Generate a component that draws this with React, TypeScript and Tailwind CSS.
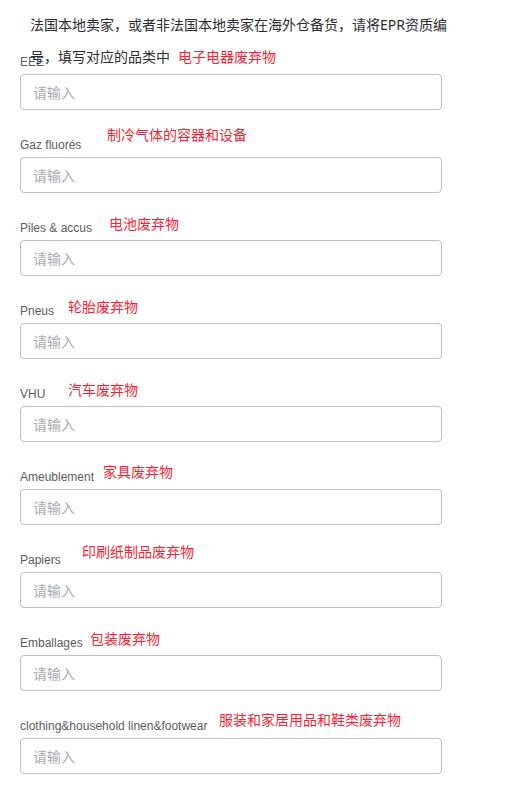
import React from "react";

interface Field {
  label: string;
  note: string;
  noteLeft: number;
  noteShift: number;
}

const fields: Field[] = [
  { label: "EEE", note: "", noteLeft: 0, noteShift: 0 },
  { label: "Gaz fluorés", note: "制冷气体的容器和设备", noteLeft: 107, noteShift: -8 },
  { label: "Piles & accus", note: "电池废弃物", noteLeft: 109, noteShift: -2 },
  { label: "Pneus", note: "轮胎废弃物", noteLeft: 68, noteShift: -2 },
  { label: "VHU", note: "汽车废弃物", noteLeft: 68, noteShift: -2 },
  { label: "Ameublement", note: "家具废弃物", noteLeft: 103, noteShift: -3 },
  { label: "Papiers", note: "印刷纸制品废弃物", noteLeft: 82, noteShift: -6 },
  { label: "Emballages", note: "包装废弃物", noteLeft: 90, noteShift: -2 },
  { label: "clothing&household linen&footwear", note: "服装和家居用品和鞋类废弃物", noteLeft: 219, noteShift: -4 },
];

const font = { fontFamily: '"Noto Sans", "Noto Sans CJK SC", sans-serif' };
const labelFont = { fontFamily: '"Liberation Sans", "Noto Sans CJK SC", sans-serif' };

export default function App() {
  return (
    <div className="relative w-[512px] min-h-[799px] bg-white" style={font}>
      {/* intro text overlaps the first label, as in the page */}
      <p className="absolute left-[30px] top-[9px] w-[422px] text-[14px] leading-[32px] text-[#2b2d31] z-10">
        法国本地卖家，或者非法国本地卖家在海外仓备货，请将EPR资质编号，填写对应的品类中
        <span className="ml-2 text-[#fb1f35]">电子电器废弃物</span>
      </p>

      <div className="flex flex-col pt-[50px] pl-5 w-[442px]">
        {fields.map((f) => (
          <div key={f.label} className="relative mb-[23px]">
            <div className="h-5 pt-[3px] flex items-center text-[12px] text-[#5a5c61]" style={labelFont}>
              {f.label}
            </div>
            {f.note && (
              <span
                className="absolute text-[14px] leading-5 text-[#fb1f35] whitespace-nowrap"
                style={{ left: f.noteLeft - 20, top: f.noteShift }}
              >
                {f.note}
              </span>
            )}
            <input
              placeholder="请输入"
              className="mt-1 block w-full h-9 rounded border border-[#b9c1cc] px-3 text-[14px] text-[#303133] placeholder:text-[#a8abb2] outline-none"
            />
          </div>
        ))}
      </div>
    </div>
  );
}
